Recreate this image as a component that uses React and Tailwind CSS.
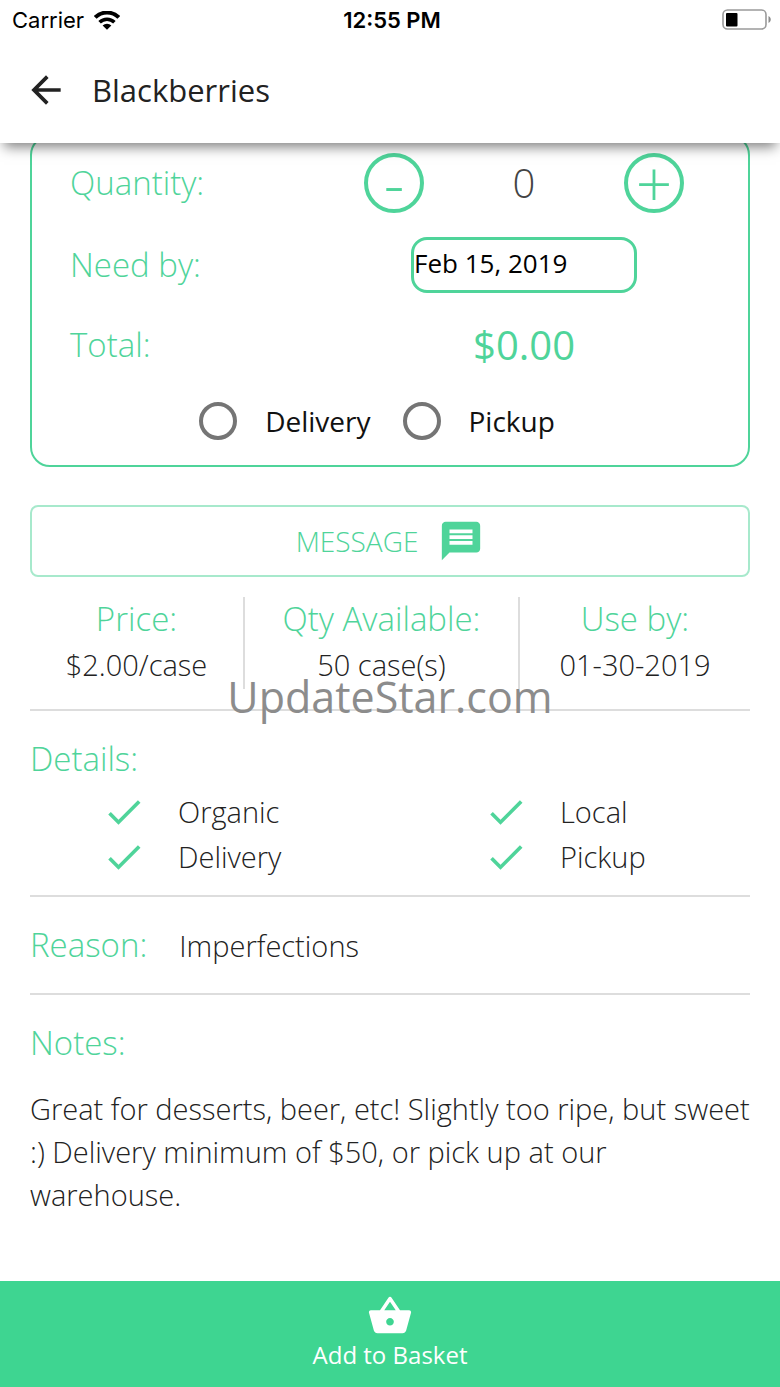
import React, { useState } from 'react';
import { MdArrowBack, MdCheck, MdMessage, MdShoppingBasket } from 'react-icons/md';

const details = ['Organic', 'Local', 'Delivery', 'Pickup'];

const StatusBar = () => (
  <div className="grid grid-cols-3 items-center h-10 pl-3 pr-2 font-['Inter',sans-serif] text-[22px] leading-10 text-black">
    <div className="flex items-center gap-2.5">
      <span>Carrier</span>
      <svg width="26" height="19" viewBox="0 0 26 19" fill="none" aria-hidden="true">
        <path d="M1.2 6.4 A16.8 16.8 0 0 1 24.8 6.4" stroke="#000" strokeWidth="4" />
        <path d="M5.6 11.2 A10.6 10.6 0 0 1 20.4 11.2" stroke="#000" strokeWidth="3.6" />
        <path d="M13 18.8 L8.6 14.6 A6.3 6.3 0 0 1 17.4 14.6 Z" fill="#000" />
      </svg>
    </div>
    <span className="text-center font-semibold">12:55 PM</span>
    <svg className="justify-self-end" width="50" height="22" viewBox="0 0 50 22" fill="none" aria-hidden="true">
      <rect x="1" y="1" width="43" height="19" rx="4.5" stroke="#9a9a9a" strokeWidth="1.6" />
      <rect x="4" y="4" width="11.5" height="13.5" rx="1" fill="#000" />
      <path d="M46.5 7 C49.5 8.5 49.5 12.5 46.5 14 Z" fill="#8a8a8a" />
    </svg>
  </div>
);

const Stat = ({ label, value }) => (
  <div className="text-center">
    <dt className="text-[33px] leading-[44px] font-light text-[#4fd49a]">{label}</dt>
    <dd className="text-[29px] leading-[48px] font-light">{value}</dd>
  </div>
);

const ListingPage = () => {
  const [quantity, setQuantity] = useState(0);
  const [needBy, setNeedBy] = useState('Feb 15, 2019');
  const [method, setMethod] = useState('');

  const total = (quantity * 2).toFixed(2);

  return (
    <div className="relative flex flex-col min-h-screen bg-white text-[#222222] font-['Open_Sans',sans-serif]">
      {/* Header */}
      <header className="relative z-10 bg-white shadow-[0_8px_12px_-4px_rgba(0,0,0,0.5)]">
        <StatusBar />
        <div className="flex items-center gap-6 h-[103px] px-6 pb-1">
          <button type="button" aria-label="Back">
            <MdArrowBack size={44} />
          </button>
          <h1 className="text-[31px] leading-10">Blackberries</h1>
        </div>
      </header>

      <main className="flex-1 px-[30px]">
        {/* Order form */}
        <form className="-mt-2 pt-4 pb-6 pl-[38px] pr-16 border-2 border-[#4fd49a] rounded-[20px]">
          <div className="flex items-center justify-between h-[60px]">
            <span className="text-[33px] font-light text-[#4fd49a]">Quantity:</span>
            <div className="flex items-center justify-between w-80">
              <button
                type="button"
                aria-label="Decrease quantity"
                className="size-[60px] border-4 border-[#4fd49a] rounded-full text-[64px] leading-[52px] font-light text-[#4fd49a]"
                onClick={() => setQuantity(Math.max(0, quantity - 1))}
              >
                -
              </button>
              <span className="text-[40px] leading-[56px] font-light text-[#444444]">{quantity}</span>
              <button
                type="button"
                aria-label="Increase quantity"
                className="size-[60px] border-4 border-[#4fd49a] rounded-full text-[64px] leading-[52px] font-light text-[#4fd49a]"
                onClick={() => setQuantity(quantity + 1)}
              >
                +
              </button>
            </div>
          </div>

          <div className="flex items-center justify-between h-14 mt-6">
            <label htmlFor="needBy" className="text-[33px] font-light text-[#4fd49a]">Need by:</label>
            <div className="flex justify-center w-80">
              <input
                id="needBy"
                type="text"
                className="w-[226px] h-14 pb-1 border-3 border-[#4fd49a] rounded-2xl text-[26px] text-black"
                value={needBy}
                onChange={e => setNeedBy(e.target.value)}
              />
            </div>
          </div>

          <div className="flex items-center justify-between h-14 mt-6">
            <span className="text-[33px] font-light text-[#4fd49a]">Total:</span>
            <span className="w-80 text-center text-[40px] leading-[56px] text-[#4fd49a]">${total}</span>
          </div>

          <div className="flex justify-center gap-8 mt-7">
            {['Delivery', 'Pickup'].map(option => (
              <label key={option} className="flex items-center gap-7 text-[28px] leading-10 text-[#111111]">
                <input
                  type="radio"
                  name="method"
                  className="appearance-none size-[38px] border-4 border-[#757575] rounded-full checked:border-[#4fd49a]"
                  checked={method === option}
                  onChange={() => setMethod(option)}
                />
                {option}
              </label>
            ))}
          </div>
        </form>

        <button
          type="button"
          className="flex items-center justify-center gap-5 w-full h-[72px] mt-[38px] border-2 border-[#a7e9cc] rounded-lg text-[28px] font-light text-[#4fd49a]"
        >
          MESSAGE
          <MdMessage size={46} />
        </button>

        {/* Price, stock and date */}
        <dl className="grid grid-cols-[43fr_55fr_46fr] mt-5 pb-5 border-b-2 border-[#dddddd] divide-x-2 divide-[#dddddd]">
          <Stat label="Price:" value="$2.00/case" />
          <Stat label="Qty Available:" value="50 case(s)" />
          <Stat label="Use by:" value="01-30-2019" />
        </dl>

        <section className="pt-6 pb-4 border-b-2 border-[#dddddd]">
          <h2 className="text-[33px] leading-[48px] font-light text-[#4fd49a]">Details:</h2>
          <ul className="grid grid-cols-2 gap-x-11 mt-1.5">
            {details.map(item => (
              <li key={item} className="flex items-center gap-8 pl-[72px] text-[29px] leading-[45px] font-light">
                <MdCheck size={44} className="text-[#4fd49a]" />
                {item}
              </li>
            ))}
          </ul>
        </section>

        <section className="flex items-center gap-8 h-[98px] border-b-2 border-[#dddddd]">
          <h2 className="text-[33px] leading-[48px] font-light text-[#4fd49a]">Reason:</h2>
          <p className="text-[29px] leading-[43px] font-light">Imperfections</p>
        </section>

        <section className="pt-6 pb-8">
          <h2 className="text-[33px] leading-[48px] font-light text-[#4fd49a]">Notes:</h2>
          <p className="mt-5 text-[29px] leading-[43px] font-light">
            Great for desserts, beer, etc! Slightly too ripe, but sweet :) Delivery minimum of $50, or pick up at our
            warehouse.
          </p>
        </section>
      </main>

      <button
        type="button"
        className="flex flex-col items-center w-full h-[106px] pt-3 bg-[#3ed591] text-2xl text-white"
      >
        <MdShoppingBasket size={46} />
        Add to Basket
      </button>

      {/* Watermark */}
      <div className="absolute inset-0 z-20 flex items-center justify-center pt-2 pointer-events-none text-[43px] text-[#8c8c8c]">
        UpdateStar.com
      </div>
    </div>
  );
};

export default ListingPage;
